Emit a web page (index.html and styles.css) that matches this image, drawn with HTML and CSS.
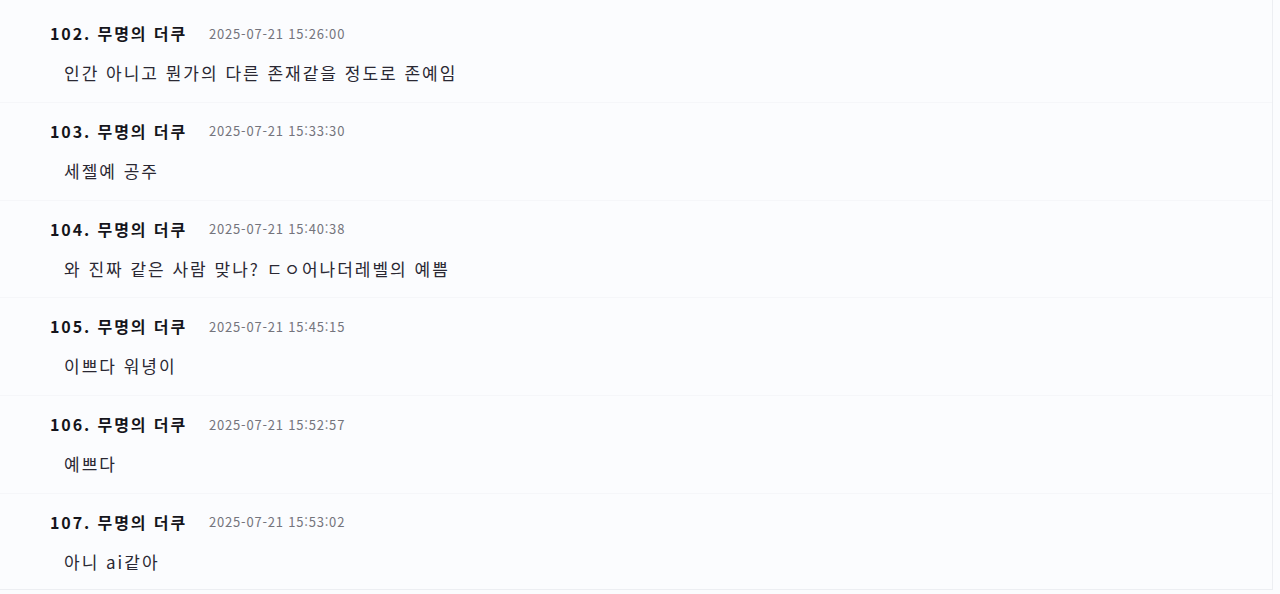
FILE: index.html
```html
<!DOCTYPE html>
<html lang="ko">
<head>
<meta charset="utf-8">
<title>댓글</title>
<link rel="stylesheet" href="styles.css">
</head>
<body>
<div class="page">
  <div class="list">
    <div class="row">
      <div class="head"><span class="name">102. 무명의 더쿠</span><span class="time">2025-07-21 15:26:00</span></div>
      <div class="text">인간 아니고 뭔가의 다른 존재같을 정도로 존예임</div>
    </div>
    <div class="row">
      <div class="head"><span class="name">103. 무명의 더쿠</span><span class="time">2025-07-21 15:33:30</span></div>
      <div class="text">세젤예 공주</div>
    </div>
    <div class="row">
      <div class="head"><span class="name">104. 무명의 더쿠</span><span class="time">2025-07-21 15:40:38</span></div>
      <div class="text">와 진짜 같은 사람 맞나? ㄷㅇ어나더레벨의 예쁨</div>
    </div>
    <div class="row">
      <div class="head"><span class="name">105. 무명의 더쿠</span><span class="time">2025-07-21 15:45:15</span></div>
      <div class="text">이쁘다 워녕이</div>
    </div>
    <div class="row">
      <div class="head"><span class="name">106. 무명의 더쿠</span><span class="time">2025-07-21 15:52:57</span></div>
      <div class="text">예쁘다</div>
    </div>
    <div class="row">
      <div class="head"><span class="name">107. 무명의 더쿠</span><span class="time">2025-07-21 15:53:02</span></div>
      <div class="text">아니 ai같아</div>
    </div>
  </div>
</div>
</body>
</html>
```
FILE: styles.css
```css
html, body {
  margin: 0;
  padding: 0;
  background: #fbfcfe;
}
body {
  font-family: "Noto Sans CJK KR", "Noto Sans", sans-serif;
  color: #1e1e24;
}
.page {
  width: 1273px;
  height: 590px;
  border-right: 1px solid #eceef2;
  border-bottom: 1px solid #eceef2;
  overflow: hidden;
  box-sizing: border-box;
}
.list {
  padding-top: 5px;
}
.row {
  height: 97.8px;
  box-sizing: border-box;
  padding: 16px 0 0 50px;
  border-bottom: 1px solid #f5f6f9;
}
.head {
  height: 24px;
  display: flex;
  align-items: center;
  gap: 22px;
}
.name {
  font-size: 16px;
  font-weight: 700;
  letter-spacing: 1.9px;
  color: #15151b;
}
.time {
  font-size: 13px;
  color: #74747c;
  letter-spacing: 0.8px;
}
.text {
  margin-top: 16px;
  height: 24px;
  line-height: 24px;
  padding-left: 14px;
  font-size: 17px;
  letter-spacing: 2px;
  color: #2a2833;
}
```
